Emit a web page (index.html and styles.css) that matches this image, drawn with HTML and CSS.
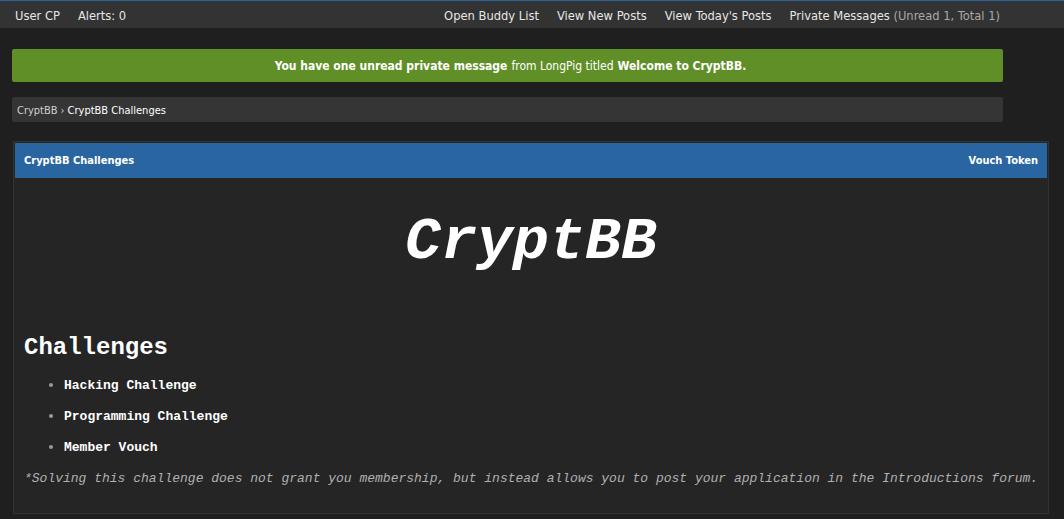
FILE: index.html
```html
<!DOCTYPE html>
<html>
<head>
<meta charset="utf-8">
<link rel="stylesheet" href="styles.css">
</head>
<body>
<div class="topbar">
  <div class="top-left">
    <a class="tlink">User CP</a>
    <a class="tlink">Alerts: 0</a>
  </div>
  <div class="top-right">
    <a class="tlink">Open Buddy List</a>
    <a class="tlink">View New Posts</a>
    <a class="tlink">View Today's Posts</a>
    <a class="tlink">Private Messages <span class="muted">(Unread 1, Total 1)</span></a>
  </div>
</div>
<div class="container">
  <div class="pm-alert"><b>You have one unread private message</b> from LongPig titled <b>Welcome to CryptBB.</b></div>
  <div class="breadcrumb"><span class="crumb">CryptBB</span> › <span class="crumb-current">CryptBB Challenges</span></div>
  <div class="panel">
    <div class="panel-head">
      <span>CryptBB Challenges</span>
      <span>Vouch Token</span>
    </div>
    <div class="panel-body">
      <h1 class="logo">CryptBB</h1>
      <h2 class="section-title">Challenges</h2>
      <ul class="challenges">
        <li>Hacking Challenge</li>
        <li>Programming Challenge</li>
        <li>Member Vouch</li>
      </ul>
      <p class="note">*Solving this challenge does not grant you membership, but instead allows you to post your application in the Introductions forum.</p>
    </div>
  </div>
</div>
</body>
</html>
```
FILE: styles.css
```css
html, body {
  margin: 0;
  padding: 0;
}
body {
  background: #1f1f1f;
  color: #fff;
  font-family: "DejaVu Sans Condensed", "DejaVu Sans", sans-serif;
  height: 519px;
  overflow: hidden;
}
.topbar {
  display: flex;
  justify-content: space-between;
  align-items: center;
  background: #333333;
  border-top: 1px solid #2a62a0;
  box-sizing: border-box;
  height: 28px;
  padding-top: 1px;
  font-size: 12.8px;
  color: #e6e6e6;
  padding-left: 15px;
  padding-right: 64px;
}
.top-left, .top-right {
  display: flex;
  gap: 18px;
}
.muted {
  color: #a8a8a8;
}
.container {
  padding: 21px 15px 0 12px;
}
.pm-alert {
  width: 991px;
  box-sizing: border-box;
  background: #5f8f26;
  border-radius: 2px;
  height: 33px;
  display: flex;
  align-items: center;
  justify-content: center;
  padding-left: 6px;
  font-size: 12px;
  color: #fff;
}
.pm-alert b {
  margin: 0 4px;
}
.breadcrumb {
  width: 991px;
  box-sizing: border-box;
  margin-top: 15px;
  background: #353535;
  border-radius: 2px;
  height: 25px;
  display: flex;
  align-items: center;
  padding-left: 5px;
  padding-top: 1px;
  font-size: 11px;
  color: #d0d0d0;
  gap: 3px;
}
.crumb-current {
  color: #fff;
}
.panel {
  margin-top: 19px;
  margin-left: 1px;
  width: 1036px;
  box-sizing: border-box;
  border: 1px solid #333;
  background: #252525;
  padding: 1px;
  height: 373px;
}
.panel-head {
  background: #2965a1;
  height: 35px;
  display: flex;
  justify-content: space-between;
  align-items: center;
  padding: 0 9px 0 9px;
  font-size: 11px;
  font-weight: bold;
  color: #fff;
}
.panel-body {
  padding: 0 0 0 9px;
  font-family: "Liberation Mono", "Courier New", monospace;
}
.logo {
  margin: 30px 0 0;
  text-align: center;
  font-size: 60px;
  font-style: italic;
  font-weight: bold;
  line-height: 68px;
  padding-right: 9px;
}
.section-title {
  margin: 58px 0 0;
  font-size: 24px;
  line-height: 28px;
  font-weight: bold;
}
.challenges {
  margin: 16px 0 0;
  padding-left: 40px;
  font-size: 13px;
  font-weight: bold;
}
.challenges li {
  line-height: 15px;
  margin-bottom: 16px;
}
.challenges li::marker {
  color: #9a9a9a;
  font-size: 16px;
}
.note {
  margin: 0;
  font-size: 13px;
  font-style: italic;
  color: #b0b0b0;
  line-height: 15px;
  white-space: nowrap;
}
```
